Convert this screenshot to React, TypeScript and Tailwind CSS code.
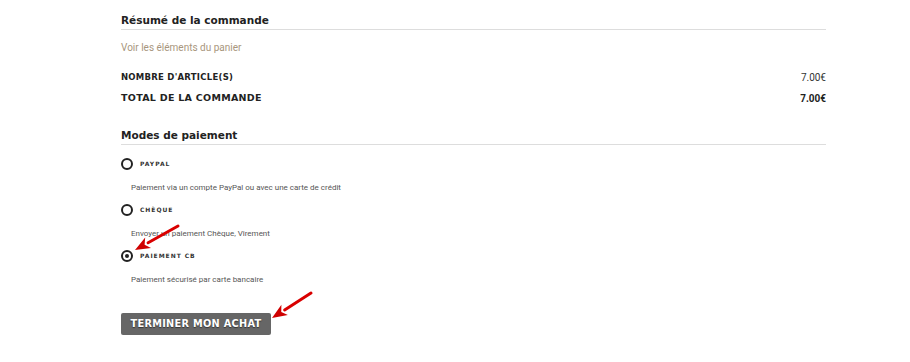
import React from 'react';

function Radio({ checked }: { checked?: boolean }) {
  return (
    <span className="w-[12px] h-[12px] rounded-full border-2 border-[#222] flex items-center justify-center shrink-0">
      {checked && <span className="w-[4px] h-[4px] rounded-full bg-[#222]" />}
    </span>
  );
}

function Method({ label, desc, checked }: { label: string; desc: string; checked?: boolean }) {
  return (
    <div>
      <div className="flex items-center gap-[7px] h-[12px]">
        <Radio checked={checked} />
        <span className="font-['DejaVu_Sans','Liberation_Sans',sans-serif] text-[6px] font-bold tracking-[0.16em] text-[#333] leading-none">
          {label}
        </span>
      </div>
      <p className="font-['Roboto','Liberation_Sans',sans-serif] pl-[10px] mt-[12px] text-[8px] leading-[12px] text-[#555]">{desc}</p>
    </div>
  );
}

function Arrow({ x1, y1, x2, y2 }: { x1: number; y1: number; x2: number; y2: number }) {
  const ang = Math.atan2(y2 - y1, x2 - x1);
  const len = 15;
  const w = 6;
  const bx = x2 - len * Math.cos(ang);
  const by = y2 - len * Math.sin(ang);
  const px = -Math.sin(ang) * w;
  const py = Math.cos(ang) * w;
  return (
    <g>
      <line x1={x1} y1={y1} x2={bx} y2={by} stroke="#d90000" strokeWidth={3} strokeLinecap="round" />
      <polygon
        points={`${x2},${y2} ${bx + px},${by + py} ${bx + 4 * Math.cos(ang)},${by + 4 * Math.sin(ang)} ${bx - px},${by - py}`}
        fill="#cf0000"
      />
    </g>
  );
}

export default function App() {
  return (
    <div className="relative w-[910px] h-[362px] bg-white overflow-hidden">
      <div className="ml-[121px] w-[705px] pt-[14px]">
        <h3 className="font-['DejaVu_Sans','Liberation_Sans',sans-serif] text-[10.5px] leading-[12px] font-bold text-[#222] pb-[3px] border-b border-[#ddd]">
          Résumé de la commande
        </h3>
        <p className="font-['Roboto','Liberation_Sans',sans-serif] mt-[11px] text-[10px] leading-[14px] text-[#a8967d]">
          Voir les éléments du panier
        </p>
        <div className="mt-[16px] flex justify-between items-center h-[12px]">
          <span className="font-['DejaVu_Sans','Liberation_Sans',sans-serif] text-[8.5px] font-bold tracking-[0.03em] text-[#222]">
            NOMBRE D'ARTICLE(S)
          </span>
          <span className="font-['Roboto','Liberation_Sans',sans-serif] text-[10px] text-[#333]">7.00€</span>
        </div>
        <div className="mt-[9px] flex justify-between items-center h-[12px]">
          <span className="font-['DejaVu_Sans','Liberation_Sans',sans-serif] text-[9.5px] font-bold tracking-[0.03em] text-[#222]">
            TOTAL DE LA COMMANDE
          </span>
          <span className="font-['Roboto','Liberation_Sans',sans-serif] text-[10px] font-bold text-[#222]">7.00€</span>
        </div>
        <h3 className="font-['DejaVu_Sans','Liberation_Sans',sans-serif] mt-[25px] text-[10.5px] leading-[12px] font-bold text-[#222] pb-[3px] border-b border-[#ddd]">
          Modes de paiement
        </h3>
        <div className="mt-[13px] flex flex-col gap-[10px]">
          <Method label="PAYPAL" desc="Paiement via un compte PayPal ou avec une carte de crédit" />
          <Method label="CHÈQUE" desc="Envoyer un paiement Chèque, Virement" />
          <Method label="PAIEMENT CB" desc="Paiement sécurisé par carte bancaire" checked />
        </div>
        <button className="font-['DejaVu_Sans','Liberation_Sans',sans-serif] mt-[27px] w-[150px] h-[22px] rounded-[2px] bg-[#666] text-white text-[9.75px] font-bold tracking-[0.03em] [text-shadow:0_1px_1px_rgba(0,0,0,0.5)]">
          TERMINER MON ACHAT
        </button>
      </div>
      <svg className="absolute left-0 top-0 pointer-events-none" width="910" height="362">
        <Arrow x1={178} y1={226} x2={135} y2={250} />
        <Arrow x1={311} y1={293} x2={272} y2={318} />
      </svg>
    </div>
  );
}
